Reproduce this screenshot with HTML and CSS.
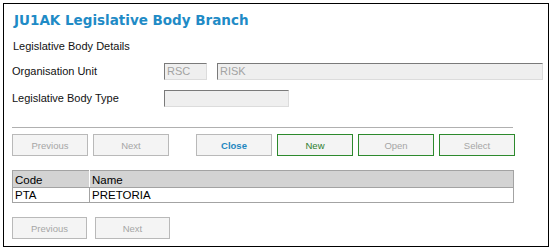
FILE: index.html
```html
<!DOCTYPE html>
<html>
<head>
<meta charset="utf-8">
<link rel="stylesheet" href="styles.css">
</head>
<body>
<div class="panel">
  <h1 class="title">JU1AK Legislative Body Branch</h1>
  <div class="section">Legislative Body Details</div>
  <div class="form">
    <div class="row">
      <span class="label">Organisation Unit</span>
      <div class="field code">RSC</div>
      <div class="field wide">RISK</div>
    </div>
    <div class="row">
      <span class="label">Legislative Body Type</span>
      <div class="field type"></div>
    </div>
  </div>
  <div class="rule"></div>
  <div class="buttons top">
    <button class="btn disabled">Previous</button>
    <button class="btn disabled">Next</button>
    <button class="btn close">Close</button>
    <button class="btn green">New</button>
    <button class="btn green disabled">Open</button>
    <button class="btn green disabled">Select</button>
  </div>
  <table class="grid">
    <thead>
      <tr><th class="c-code">Code</th><th>Name</th></tr>
    </thead>
    <tbody>
      <tr><td class="c-code">PTA</td><td>PRETORIA</td></tr>
    </tbody>
  </table>
  <div class="buttons bottom">
    <button class="btn disabled">Previous</button>
    <button class="btn disabled">Next</button>
  </div>
</div>
</body>
</html>
```

FILE: styles.css
```css
html, body {
  margin: 0;
  padding: 0;
  background: #ffffff;
}
body {
  font-family: "Liberation Sans", Arial, sans-serif;
  color: #000;
}
.panel {
  box-sizing: border-box;
  margin: 3px 0 0 3px;
  width: 546px;
  height: 244px;
  border: 1px solid #000;
  padding: 8px 0 0 8px;
}
.title {
  margin: 0 0 0 2px;
  font-family: "DejaVu Sans", Verdana, sans-serif;
  font-weight: bold;
  font-size: 13.5px;
  line-height: 16px;
  color: #1f8bc6;
}
.section {
  margin: 11px 0 0 1px;
  font-size: 11px;
  line-height: 14px;
  color: #111;
}
.form {
  margin-top: 10px;
  display: flex;
  flex-direction: column;
  gap: 11px;
}
.row {
  display: flex;
  align-items: center;
  height: 16px;
}
.label {
  width: 152px;
  font-size: 11px;
  line-height: 14px;
  color: #111;
}
.field {
  box-sizing: border-box;
  height: 17px;
  background: #efefef;
  border-top: 1px solid #7a7a7a;
  border-left: 1px solid #7a7a7a;
  border-right: 1px solid #dcdcdc;
  border-bottom: 1px solid #dcdcdc;
  font-size: 11px;
  line-height: 15px;
  color: #a3a3a3;
  padding-left: 2px;
}
.field.code { width: 43px; }
.field.wide { width: 326px; margin-left: 10px; }
.field.type { width: 125px; }
.rule {
  margin-top: 21px;
  width: 501px;
  height: 1px;
  background: #b0b0b0;
}
.buttons {
  display: flex;
}
.buttons.top {
  margin-top: 6px;
  gap: 5px;
}
.buttons.bottom {
  margin-top: 14px;
  gap: 8px;
}
.btn {
  box-sizing: border-box;
  width: 76px;
  height: 22px;
  margin: 0;
  padding: 0;
  background: #f4f4f4;
  border: 1px solid #b9b9b9;
  border-radius: 0;
  font-family: "Liberation Sans", Arial, sans-serif;
  font-size: 9.5px;
  color: #333;
}
.buttons.bottom .btn { width: 75px; }
.btn.disabled { color: #a6a6a6; }
.btn.close {
  margin-left: 22px;
  font-weight: bold;
  color: #1f87c0;
}
.btn.green {
  border-color: #2d8a2d;
  color: #2e7d2e;
}
.btn.green.disabled { color: #a6a6a6; }
.grid {
  margin-top: 14px;
  width: 502px;
  border-collapse: collapse;
  border: 1px solid #a3a3a3;
  font-size: 11.5px;
  line-height: 14px;
}
.grid th {
  background: #d3d3d3;
  font-weight: normal;
  text-align: left;
  padding: 1px 2px 0 2px;
  height: 15px;
  border-right: 1px solid #ffffff;
  border-bottom: 1px solid #a3a3a3;
}
.grid th:last-child { border-right: none; }
.grid td {
  padding: 0 2px;
  height: 14px;
  border-right: 1px solid #a3a3a3;
}
.grid .c-code { width: 72px; }
```
